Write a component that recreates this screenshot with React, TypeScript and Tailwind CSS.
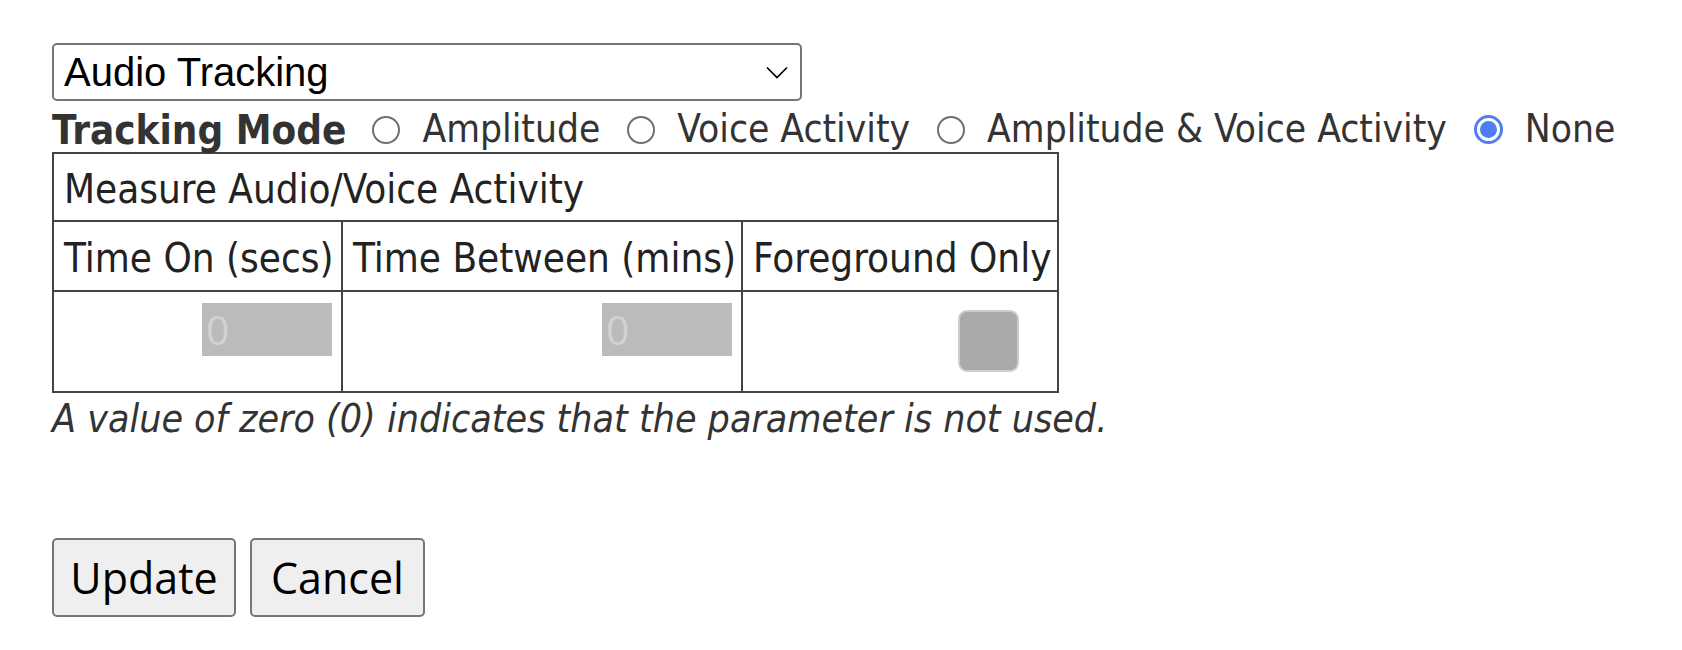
const body = { fontFamily: '"DejaVu Sans Condensed", "DejaVu Sans", sans-serif' };
const ui = { fontFamily: '"Open Sans", "Noto Sans", sans-serif' };

function Radio({ checked }: { checked?: boolean }) {
  if (checked) {
    return (
      <span className="flex h-[29px] w-[29px] shrink-0 items-center justify-center rounded-full border-[3px] border-[#4d7ef5] bg-white">
        <span className="block h-[17px] w-[17px] rounded-full bg-[#4d7ef5]" />
      </span>
    );
  }
  return <span className="block h-[28px] w-[28px] shrink-0 rounded-full border-2 border-[#6f6f6f] bg-white" />;
}

const modes = [
  { label: 'Amplitude', checked: false },
  { label: 'Voice Activity', checked: false },
  { label: 'Amplitude & Voice Activity', checked: false },
  { label: 'None', checked: true },
];

function ZeroInput() {
  return (
    <div className="flex h-[53px] w-[130px] items-center bg-[#bbbbbb] pl-[4px] text-[41px] leading-none text-[#d2d2d2]" style={ui}>
      0
    </div>
  );
}

export default function App() {
  return (
    <div className="min-h-[650px] bg-white pt-[43px] pl-[52px] text-[#333]" style={body}>
      <div
        className="flex h-[58px] w-[750px] items-center justify-between rounded-[5px] border-2 border-[#767676] pl-[10px] pr-[12px] text-[40px] text-black"
        style={{ fontFamily: '"Liberation Sans", Arial, sans-serif' }}
      >
        <span>Audio Tracking</span>
        <svg width="22" height="13" viewBox="0 0 22 13" fill="none" stroke="black" strokeWidth="1.7">
          <polyline points="1,1.5 11,11.5 21,1.5" />
        </svg>
      </div>

      <div className="flex h-[51px] items-center pt-[6px] leading-none">
        <span className="text-[40px] font-bold">Tracking Mode</span>
        {modes.map((m, i) => (
          <div key={m.label} className="flex items-center">
            <span className={i === 0 ? 'ml-[26px]' : 'ml-[27px]'}><Radio checked={m.checked} /></span>
            <span className="ml-[22px] text-[38.6px]">{m.label}</span>
          </div>
        ))}
      </div>

      <div className="w-[1007px] border-2 border-[#444] text-[40px] leading-none text-[#222]">
        <div className="flex h-[68px] items-center border-b-2 border-[#444] pt-[4px] pl-[10px]">
          Measure Audio/Voice Activity
        </div>
        <div className="grid h-[70px] grid-cols-[289px_400px_314px] border-b-2 border-[#444]">
          <div className="flex items-center border-r-2 border-[#444] pt-[4px] pl-[10px]">Time On (secs)</div>
          <div className="flex items-center border-r-2 border-[#444] pt-[4px] pl-[10px]">Time Between (mins)</div>
          <div className="flex items-center pt-[4px] pl-[10px]">Foreground Only</div>
        </div>
        <div className="grid h-[99px] grid-cols-[289px_400px_314px]">
          <div className="flex justify-end border-r-2 border-[#444] pt-[11px] pr-[9px]">
            <ZeroInput />
          </div>
          <div className="flex justify-end border-r-2 border-[#444] pt-[11px] pr-[9px]">
            <ZeroInput />
          </div>
          <div className="flex justify-end pt-[18px] pr-[38px]">
            <div className="h-[62px] w-[61px] rounded-[9px] border-2 border-[#cdcdcd] bg-[#aaaaaa]" />
          </div>
        </div>
      </div>

      <p className="mt-[2px] text-[39px] leading-[48px] italic">
        A value of zero (0) indicates that the parameter is not used.
      </p>

      <div className="mt-[95px] flex gap-[14px] text-[43px] text-black" style={ui}>
        <button className="h-[79px] w-[184px] rounded-[5px] border-2 border-[#767676] bg-[#efefef] leading-none">
          Update
        </button>
        <button className="h-[79px] w-[175px] rounded-[5px] border-2 border-[#767676] bg-[#efefef] leading-none">
          Cancel
        </button>
      </div>
    </div>
  );
}
